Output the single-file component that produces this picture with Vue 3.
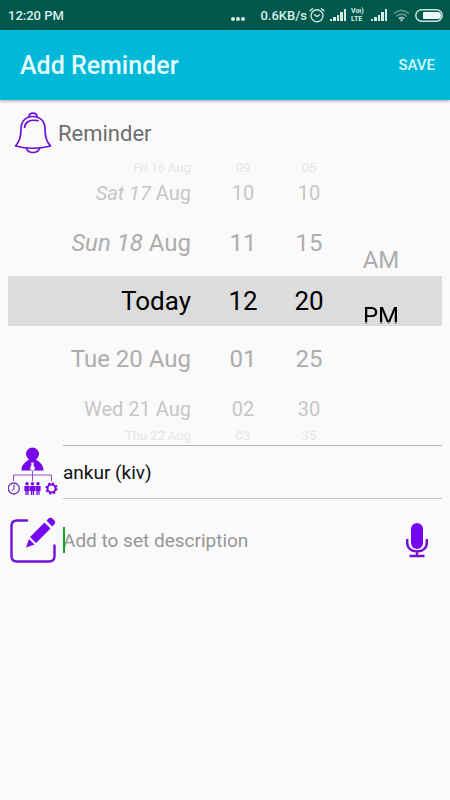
<template>
  <div class="screen">
    <div class="status-bar">
      <span class="clock">12:20 PM</span>
      <span class="dots"><i></i><i></i><i></i></span>
      <span class="speed">0.6KB/s</span>
      <svg class="alarm" viewBox="0 0 16 16" width="16" height="16" fill="none" stroke="#c9e4dc" stroke-width="1.4">
        <circle cx="8" cy="8.8" r="6" />
        <path d="M.6 4.2 4 1.2M15.4 4.2 12 1.2M5 7.3 8 9.6 11 7.5" />
      </svg>
      <svg class="signal" viewBox="0 0 17 12" width="17" height="12" fill="#d8ebe5">
        <path d="M0 10h2v2H0zM3 8h3v4H3zM7 6h2v6H7zM10 3h3v9h-3zM14 0h2v12h-2z" />
      </svg>
      <span class="volte">Voı)<br>LTE</span>
      <svg class="signal" viewBox="0 0 17 12" width="17" height="12" fill="#d8ebe5">
        <path d="M0 10h2v2H0zM3 8h3v4H3zM7 6h2v6H7zM10 3h3v9h-3zM14 0h2v12h-2z" />
      </svg>
      <svg class="wifi" viewBox="0 0 17 13" width="17" height="13" fill="none" stroke="#5f968a" stroke-width="1.6">
        <path d="M.8 4.6Q8.5-2 16.2 4.6M3.3 7.3Q8.5 2.8 13.7 7.3" />
        <path d="M5.7 9.7Q8.5 7.4 11.3 9.7" stroke="#a9cbc2" />
        <path d="M6.9 10.5h3.2L8.5 12.8z" fill="#d8ebe5" stroke="none" />
      </svg>
      <svg class="battery" viewBox="0 0 28 13" width="28" height="13">
        <rect x=".8" y=".8" width="26.4" height="11.4" rx="5.7" fill="none" stroke="#c9e4dc" stroke-width="1.5" />
        <path d="M9 3h13.5a3.5 3.5 0 0 1 0 7H9q-1 0-1-1V4q0-1 1-1z" fill="#eef8f5" />
      </svg>
    </div>

    <header class="app-bar">
      <h1>Add Reminder</h1>
      <button type="button" class="save">SAVE</button>
    </header>

    <div class="reminder-row">
      <svg class="bell" viewBox="0 0 38 42" width="38" height="42" fill="none" stroke="#6a10d8" stroke-width="1.7" stroke-linejoin="round" stroke-linecap="round">
        <path d="M15 4.5C15.5 0 22.5 0 23 4.5M12.5 36.5Q14 40.5 19 40.5Q24 40.5 25.5 36.5" />
        <path d="M1.5 34C5.5 30 7 25 7 17C7 9 12 4.5 19 4.5C26 4.5 31 9 31 17C31 25 32.5 30 36.5 34Q19 38.5 1.5 34z" />
        <path d="M10.5 15.5C11 10.5 15.5 7 24 8.7" />
      </svg>
      <h2>Reminder</h2>
    </div>

    <div class="picker">
      <div v-for="wheel in wheels" :key="wheel.name" class="wheel" :class="wheel.name" role="group" :aria-label="wheel.name">
        <button
            v-for="(item, i) in wheel.items"
            :key="item.join(' ')"
            type="button"
            class="item"
            :class="'level-' + Math.abs(i - 3)"
        >
          <span :class="{ lean: i < 3 }">{{ item[0] }}</span><template v-if="item[1]">&nbsp;{{ item[1] }}</template>
        </button>
      </div>
      <div class="wheel ampm" role="group" aria-label="ampm">
        <button type="button" class="item am">AM</button>
        <button type="button" class="item pm">PM</button>
      </div>
    </div>

    <div class="field-row person-row">
      <label for="person" class="icon-cell" aria-label="Person">
        <svg viewBox="0 0 50 50" width="50" height="50" fill="#7606e6">
          <circle cx="24.5" cy="7" r="6.5" />
          <path d="M13.5 23.5C13.5 17.5 17 15.5 21 12.5h7c4 3 7.500 5 7.500 11z" />
          <path d="M23 15.5h3l-.6 2 1.8 4.5-2.7 1.7-2.7-1.7L23.6 17.5z" fill="#fafafa" />
          <path d="M5.5 34v-6h38v6M24.5 24v10" fill="none" stroke="#8a4fc8" />
          <circle cx="5.8" cy="41.5" r="5.5" fill="none" stroke="#6d2bbb" stroke-width="1.3" />
          <path d="M6 37.5V42L3.5 43.8" fill="none" stroke="#6d2bbb" />
          <g v-for="x in [19, 24.5, 30]" :key="x" :transform="`translate(${x} 35)`">
            <circle cy="1.8" r="1.8" />
            <path d="M-2.6 4h5.2v5H1.6v4H.3V9.500h-.6V13h-1.300V9h-1z" />
          </g>
          <circle cx="43.5" cy="41.5" r="4" fill="none" stroke="#7606e6" stroke-width="1.9" />
          <circle cx="43.5" cy="41.5" r="5.3" fill="none" stroke="#7606e6" stroke-width="1.7" stroke-dasharray="2.08 2.08" />
        </svg>
      </label>
      <input id="person" v-model="person" type="text">
    </div>

    <div class="field-row description-row">
      <label for="description" class="icon-cell" aria-label="Description">
        <svg viewBox="0 0 50 50" width="50" height="50">
          <path d="M19 5.5H9Q3.5 5.5 3.5 11v30q0 5.5 5.5 5.500h32q5.500 0 5.500-5.500V30.500" fill="none" stroke="#7010d8" stroke-width="2.4" stroke-linecap="round" />
          <path d="M22 22 36.5 7.5 42.5 13.5 28 28zM38.5 5.5l2-2q2-1.8 4.2.3l1.500 1.500q2 2 0 4.200l-2 2zM18 32.500l3-8.500 5.500 5.500z" fill="#7606f0" />
        </svg>
      </label>
      <div class="text-wrap">
        <input id="description" v-model="description" type="text" placeholder="Add to set description">
        <span class="caret"></span>
      </div>
      <button type="button" class="mic" aria-label="Speak">
        <svg viewBox="0 0 22 36" width="22" height="36">
          <rect x="5" y="1" width="12" height="26" rx="6" fill="#7606f0" />
          <path d="M1.2 17v3.5c0 5.500 4 9 9.800 9s9.800-3.500 9.800-9V17M11 29.500V33M3.500 34h15" fill="none" stroke="#7410cc" stroke-width="2.4" />
        </svg>
      </button>
    </div>
  </div>
</template>

<script setup>
import { ref } from 'vue';

const person = ref('ankur (kiv)');
const description = ref('');

const wheels = [
  {
    name: 'date',
    items: [
      ['Fri 16', 'Aug'],
      ['Sat 17', 'Aug'],
      ['Sun 18', 'Aug'],
      ['Today'],
      ['Tue 20', 'Aug'],
      ['Wed 21', 'Aug'],
      ['Thu 22', 'Aug'],
    ],
  },
  { name: 'hour', items: [['09'], ['10'], ['11'], ['12'], ['01'], ['02'], ['03']] },
  { name: 'minute', items: [['05'], ['10'], ['15'], ['20'], ['25'], ['30'], ['35']] },
];
</script>

<style>
body {
  background: #fafafa;
}
</style>

<style scoped>
.screen {
  min-height: 100vh;
  font-family: Roboto, "Liberation Sans", sans-serif;
  background: #fafafa;
}

button,
input {
  padding: 0;
  border: 0;
  background: none;
  font-family: inherit;
  outline: none;
}

svg {
  display: block;
}

.status-bar {
  display: flex;
  align-items: center;
  height: 30px;
  padding: 0 7px 0 8px;
  background: #00574b;
  color: #d8efe8;
  font-size: 13px;
  font-weight: 500;
}

.clock {
  flex: 1;
}

.dots {
  display: flex;
  gap: 1px;
  padding-top: 8px;
  margin-right: 15px;
}

.dots i {
  width: 4px;
  height: 4px;
  border-radius: 50%;
  background: #d8efe8;
}

.alarm {
  margin: 0 5px 0 2px;
}

.volte {
  width: 14px;
  margin: 0 6px 0 4px;
  font-size: 7px;
  font-weight: 700;
  line-height: 8px;
  white-space: nowrap;
}

.wifi {
  margin: 0 5px;
}

.app-bar {
  display: flex;
  align-items: center;
  justify-content: space-between;
  height: 70px;
  padding: 0 15px 0 20px;
  background: #00b8d8;
  box-shadow: 0 1px 3px rgba(0, 0, 0, 0.35);
}

h1,
h2 {
  margin: 0;
}

h1 {
  color: #e4fbff;
  font-size: 25px;
  font-weight: 500;
}

.save {
  color: #d5f7fc;
  font-size: 15px;
  font-weight: 500;
}

.reminder-row {
  display: flex;
  align-items: center;
  gap: 6px;
  height: 50px;
  padding: 8px 14px 0;
}

h2 {
  color: #6e6e6e;
  font-size: 22px;
  font-weight: 400;
}

.picker {
  display: grid;
  grid-template-columns: 202fr 66fr 66fr 78fr 22fr;
  margin: 0 8px 1px;
  background: linear-gradient(#dcdcdc, #dcdcdc) center / 100% 50px no-repeat;
}

.wheel {
  display: flex;
  flex-direction: column;
}

.item {
  display: flex;
  align-items: center;
  justify-content: center;
  height: 50px;
  overflow: hidden;
  color: #000;
  font-size: 26px;
  line-height: 1;
  white-space: nowrap;
}

.date .item {
  justify-content: flex-end;
  padding-right: 19px;
}

.level-1 {
  height: 66px;
  color: #adadad;
  font-size: 24px;
}

.level-2 {
  height: 34px;
  color: #c6c6c6;
  font-size: 20px;
}

.level-3 {
  height: 18px;
  color: #e6e6e6;
  font-size: 13px;
}

.date .lean {
  font-style: italic;
}

.ampm {
  padding-top: 74px;
}

.ampm .item {
  height: 56px;
  font-size: 24px;
}

.ampm .am {
  color: #adadad;
}

/* the lower edge of the half-scrolled item is dimmed */
.ampm .pm {
  background: linear-gradient(#000 34px, #999 34px);
  background-clip: text;
  color: transparent;
}

.field-row {
  display: flex;
  align-items: center;
  padding: 0 8px;
}

.icon-cell {
  width: 50px;
  margin-right: 5px;
}

.field-row input {
  flex: 1;
  width: 100%;
  min-width: 0;
  font-size: 19px;
  color: #111;
}

.person-row input {
  height: 52px;
  border-top: 1px solid #b5b5b5;
  border-bottom: 1px solid #c4c4c4;
}

.description-row {
  padding-top: 16px;
}

.text-wrap {
  position: relative;
  display: flex;
  flex: 1;
}

.text-wrap input {
  height: 50px;
}

.text-wrap input::placeholder {
  color: #969696;
  opacity: 1;
}

.caret {
  position: absolute;
  top: 12px;
  left: 0;
  width: 2px;
  height: 26px;
  background: #14a522;
}

.mic {
  margin-right: 14px;
}
</style>
